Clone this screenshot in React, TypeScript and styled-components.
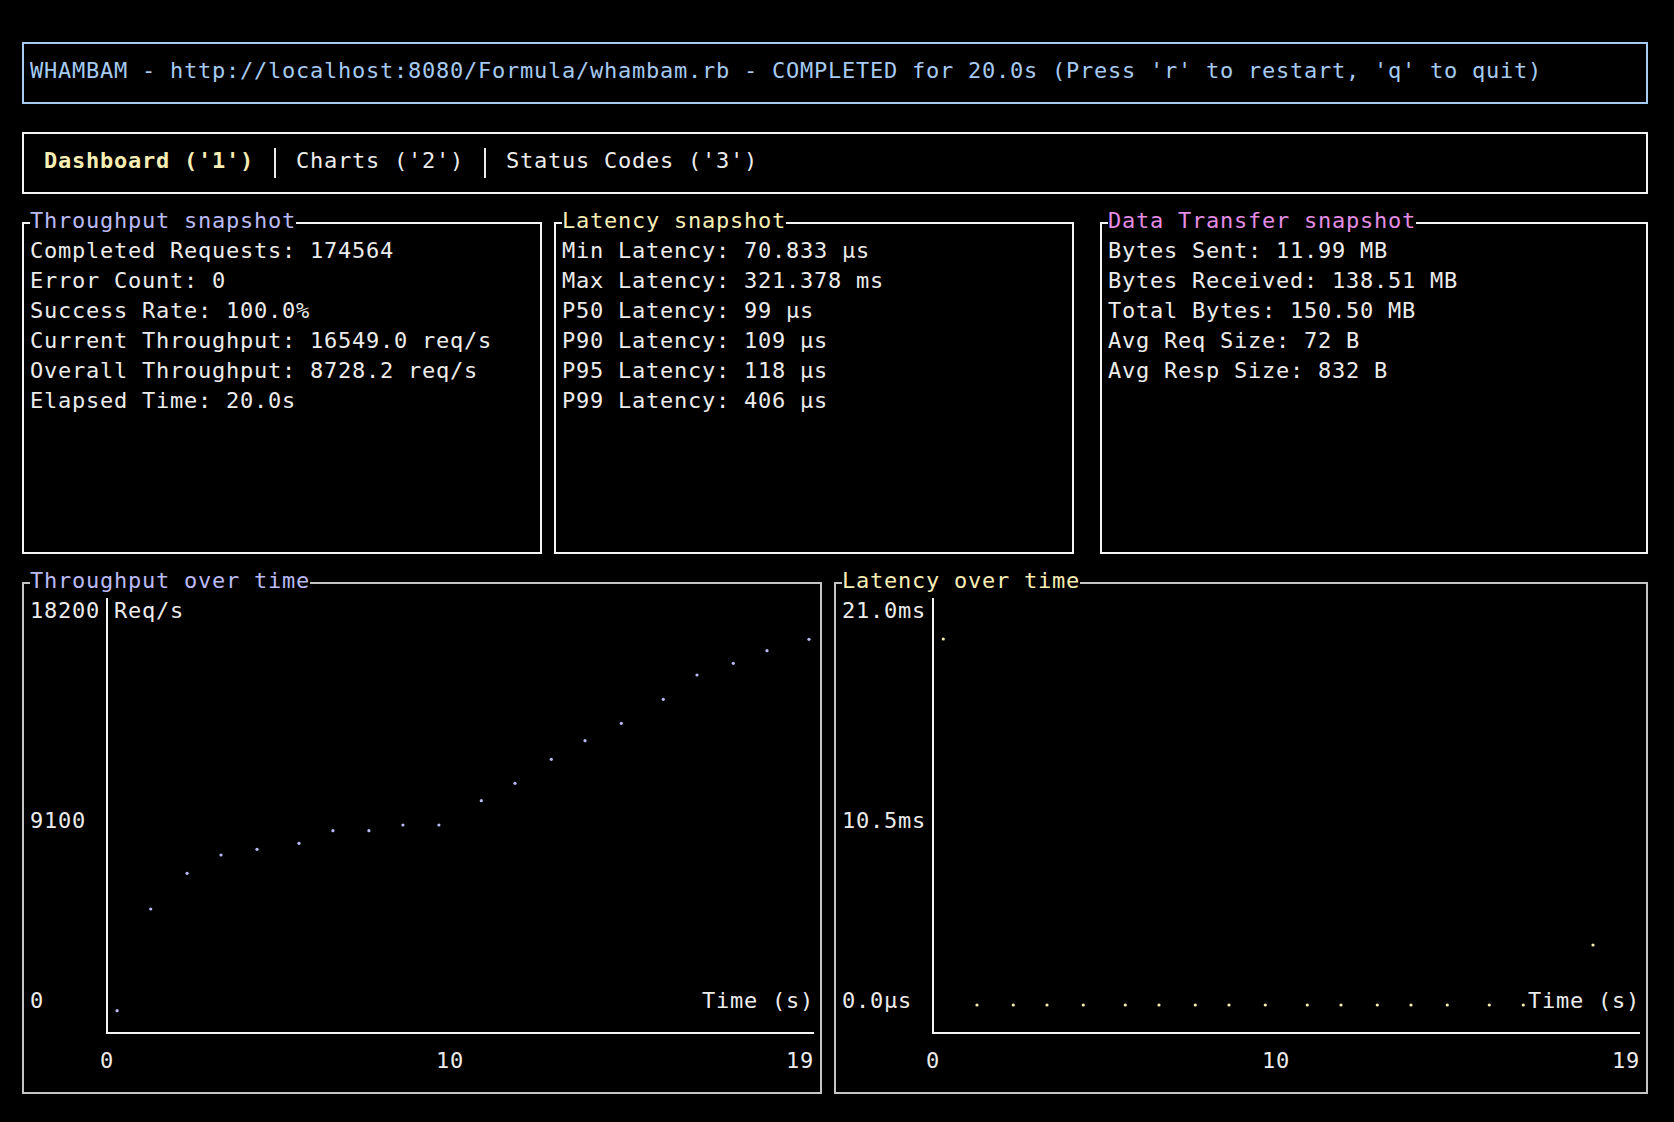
import React from 'react';
import styled, { createGlobalStyle } from 'styled-components';

// terminal cell metrics
const CELL_W = 14;
const ROW_H = 30;
// glyphs sit a little high in the cell, as in the terminal
const TEXT_LH = 25;

const colors = {
  text: '#ececec',
  border: '#f4f4f4',
  chartBorder: '#c4c4c4',
  axis: '#f4f4f4',
  blue: '#a6caf2',
  yellow: '#f7eeb4',
  lavender: '#babaf4',
  pink: '#e48ce4',
};

const GlobalStyle = createGlobalStyle`
  html, body {
    margin: 0;
    padding: 0;
    background: #000;
  }
  body {
    font-family: 'DejaVu Sans Mono', 'Liberation Mono', monospace;
    font-size: 22px;
    letter-spacing: 0.756px;
    line-height: ${ROW_H}px;
    color: ${colors.text};
  }
`;

const cellText = `
  line-height: ${TEXT_LH}px;
  padding-bottom: ${ROW_H - TEXT_LH}px;
  white-space: pre;
`;

const Screen = styled.main`
  width: 1626px;
  padding: 42px 0 0 22px;
  display: flex;
  flex-direction: column;
`;

const HeaderBox = styled.header`
  border: 2px solid ${colors.blue};
  padding: 14px 6px;
  color: ${colors.blue};
  margin-bottom: 28px;
`;

const HeaderLine = styled.div`
  ${cellText}
`;

const TabBar = styled.nav`
  border: 2px solid ${colors.border};
  padding: 14px 6px;
  display: flex;
  align-items: flex-start;
  margin-bottom: 14px;
`;

const Tab = styled.span<{ $active?: boolean }>`
  ${cellText}
  font-weight: ${(p) => (p.$active ? 700 : 400)};
  color: ${(p) => (p.$active ? colors.yellow : colors.text)};
`;

const TabDivider = styled.span`
  display: inline-block;
  width: ${CELL_W}px;
  height: ${ROW_H}px;
  background: linear-gradient(${colors.text}, ${colors.text}) center / 2px 100% no-repeat;
`;

const PanelRow = styled.section<{ $last?: boolean }>`
  display: flex;
  gap: 12px;
  margin-bottom: ${(p) => (p.$last ? 0 : 14)}px;
`;

const Panel = styled.fieldset<{ $cells: number; $skip?: number; $border: string }>`
  box-sizing: border-box;
  flex: none;
  width: ${(p) => p.$cells * CELL_W - 12}px;
  min-width: 0;
  margin: 0 0 0 ${(p) => (p.$skip ?? 0) * CELL_W}px;
  padding: 0 6px 14px;
  border: 2px solid ${(p) => p.$border};
`;

const PanelTitle = styled.legend<{ $color: string }>`
  padding: 0 0 ${ROW_H - TEXT_LH}px;
  line-height: ${TEXT_LH}px;
  color: ${(p) => p.$color};
  white-space: pre;
`;

const SnapshotBody = styled.div`
  height: ${10 * ROW_H}px;
`;

const StatLine = styled.div`
  ${cellText}
`;

const ChartGrid = styled.div<{ $cols: number }>`
  display: grid;
  grid-template-columns: repeat(${(p) => p.$cols}, ${CELL_W}px);
  grid-template-rows: repeat(16, ${ROW_H}px);
`;

const GridText = styled.span<{ $col: number; $row: number; $span?: number; $masked?: boolean }>`
  ${cellText}
  grid-column: ${(p) => p.$col} / span ${(p) => p.$span ?? 1};
  grid-row: ${(p) => p.$row};
  color: ${colors.text};
  background: ${(p) => (p.$masked ? '#000' : 'transparent')};
`;

const Plot = styled.svg<{ $col: number; $span: number }>`
  grid-column: ${(p) => p.$col} / span ${(p) => p.$span};
  grid-row: 1 / span 15;
  display: block;
`;

type Label = { text: string; at: number };

type ChartProps = {
  title: string;
  titleColor: string;
  cells: number;
  cols: number;
  axisCol: number;
  yLabels: Label[];
  xLabels: Label[];
  unit?: string;
  points: [number, number][];
  dotColor: string;
};

function TimeChart({
  title,
  titleColor,
  cells,
  cols,
  axisCol,
  yLabels,
  xLabels,
  unit,
  points,
  dotColor,
}: ChartProps) {
  const span = cols - axisCol + 1;
  const w = span * CELL_W;
  const h = 15 * ROW_H;
  const axisY = h - ROW_H / 2;
  return (
    <Panel $cells={cells} $border={colors.chartBorder}>
      <PanelTitle $color={titleColor}>{title}</PanelTitle>
      <ChartGrid $cols={cols}>
        {yLabels.map((l) => (
          <GridText key={l.text} $col={1} $row={l.at} $span={l.text.length}>
            {l.text}
          </GridText>
        ))}
        <Plot $col={axisCol} $span={span} width={w} height={h} viewBox={`0 0 ${w} ${h}`}>
          <path
            d={`M7 0 V${axisY} H${w}`}
            fill="none"
            stroke={colors.axis}
            strokeWidth={2}
          />
          {points.map(([x, y]) => (
            <circle key={`${x}-${y}`} cx={x} cy={y} r={1.6} fill={dotColor} />
          ))}
        </Plot>
        {unit && (
          <GridText $col={axisCol + 1} $row={1} $span={unit.length}>
            {unit}
          </GridText>
        )}
        <GridText $col={cols - 7} $row={14} $span={8} $masked>
          Time (s)
        </GridText>
        {xLabels.map((l) => (
          <GridText key={l.text} $col={l.at} $row={16} $span={l.text.length}>
            {l.text}
          </GridText>
        ))}
      </ChartGrid>
    </Panel>
  );
}

const throughputPoints: [number, number][] = [
  [17.1, 412.7], [50.7, 311], [87.1, 275.3], [121, 257], [157, 251.3],
  [199, 245.3], [232.9, 232.7], [268.9, 232.7], [302.9, 227], [338.9, 227],
  [381.3, 202.7], [415, 185.3], [451.3, 161.3], [485, 142.7], [521.3, 125.3],
  [563.3, 101.3], [597, 77], [633.3, 65.3], [667, 52.7], [709, 41.3],
];

const latencyPoints: [number, number][] = [
  [17.3, 41], [51, 407], [87.3, 407], [121, 407], [157.3, 407], [199.3, 407],
  [233, 407], [269.3, 407], [303, 407], [339.3, 407], [381.3, 407], [415, 407],
  [451.3, 407], [485, 407], [521.3, 407], [563.3, 407], [597.3, 407],
  [633.3, 407], [667, 347], [709, 407],
];

const snapshots = [
  {
    title: 'Throughput snapshot',
    color: colors.lavender,
    cells: 38,
    skip: 0,
    lines: [
      'Completed Requests: 174564',
      'Error Count: 0',
      'Success Rate: 100.0%',
      'Current Throughput: 16549.0 req/s',
      'Overall Throughput: 8728.2 req/s',
      'Elapsed Time: 20.0s',
    ],
  },
  {
    title: 'Latency snapshot',
    color: colors.yellow,
    cells: 38,
    skip: 0,
    lines: [
      'Min Latency: 70.833 µs',
      'Max Latency: 321.378 ms',
      'P50 Latency: 99 µs',
      'P90 Latency: 109 µs',
      'P95 Latency: 118 µs',
      'P99 Latency: 406 µs',
    ],
  },
  {
    title: 'Data Transfer snapshot',
    color: colors.pink,
    cells: 40,
    skip: 1,
    lines: [
      'Bytes Sent: 11.99 MB',
      'Bytes Received: 138.51 MB',
      'Total Bytes: 150.50 MB',
      'Avg Req Size: 72 B',
      'Avg Resp Size: 832 B',
    ],
  },
];

export default function App() {
  return (
    <>
      <GlobalStyle />
      <Screen>
        <HeaderBox>
          <HeaderLine>
            WHAMBAM - http://localhost:8080/Formula/whambam.rb - COMPLETED for 20.0s (Press 'r' to
            restart, 'q' to quit)
          </HeaderLine>
        </HeaderBox>
        <TabBar>
          <Tab> </Tab>
          <Tab $active>Dashboard ('1')</Tab>
          <Tab> </Tab>
          <TabDivider />
          <Tab> Charts ('2') </Tab>
          <TabDivider />
          <Tab> Status Codes ('3')</Tab>
        </TabBar>
        <PanelRow>
          {snapshots.map((s) => (
            <Panel key={s.title} $cells={s.cells} $skip={s.skip} $border={colors.border}>
              <PanelTitle $color={s.color}>{s.title}</PanelTitle>
              <SnapshotBody>
                {s.lines.map((line) => (
                  <StatLine key={line}>{line}</StatLine>
                ))}
              </SnapshotBody>
            </Panel>
          ))}
        </PanelRow>
        <PanelRow $last>
          <TimeChart
            title="Throughput over time"
            titleColor={colors.lavender}
            cells={58}
            cols={56}
            axisCol={6}
            unit="Req/s"
            yLabels={[
              { text: '18200', at: 1 },
              { text: '9100', at: 8 },
              { text: '0', at: 14 },
            ]}
            xLabels={[
              { text: '0', at: 6 },
              { text: '10', at: 30 },
              { text: '19', at: 55 },
            ]}
            points={throughputPoints}
            dotColor={colors.lavender}
          />
          <TimeChart
            title="Latency over time"
            titleColor={colors.yellow}
            cells={59}
            cols={57}
            axisCol={7}
            yLabels={[
              { text: '21.0ms', at: 1 },
              { text: '10.5ms', at: 8 },
              { text: '0.0µs', at: 14 },
            ]}
            xLabels={[
              { text: '0', at: 7 },
              { text: '10', at: 31 },
              { text: '19', at: 56 },
            ]}
            points={latencyPoints}
            dotColor={colors.yellow}
          />
        </PanelRow>
      </Screen>
    </>
  );
}
